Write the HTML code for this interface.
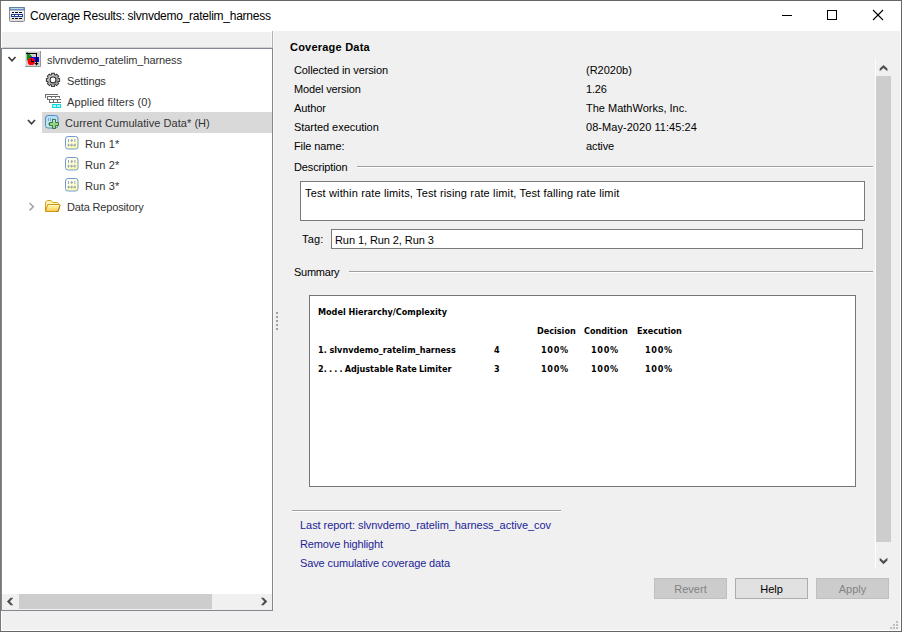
<!DOCTYPE html>
<html>
<head>
<meta charset="utf-8">
<title>Coverage Results: slvnvdemo_ratelim_harness</title>
<style>
html,body{margin:0;padding:0;}
body{width:902px;height:632px;overflow:hidden;background:#f0f0f0;position:relative;
 font-family:"Liberation Sans",sans-serif;font-size:11px;color:#000;}
.abs{position:absolute;}
.t{position:absolute;white-space:nowrap;line-height:14px;height:14px;}
#win{position:absolute;left:0;top:0;width:902px;height:632px;background:#f0f0f0;overflow:hidden;}
#titlebar{position:absolute;left:1px;top:1px;width:900px;height:30px;background:#fff;}
#title{position:absolute;left:29px;top:8px;font-size:12px;line-height:14px;letter-spacing:-0.25px;white-space:nowrap;color:#000;}
#tree{position:absolute;left:1px;top:48px;width:270px;height:561px;border:1px solid #828790;background:#fff;}
.row{position:absolute;left:0;height:21px;width:270px;}
.tt{position:absolute;white-space:nowrap;line-height:14px;color:#333;font-size:11px;}
.hl{position:absolute;height:1px;background:#a0a0a0;}
.box{position:absolute;background:#fff;border:1px solid #7a7a7a;box-sizing:border-box;}
.btn{position:absolute;top:578px;width:73px;height:21px;box-sizing:border-box;text-align:center;line-height:21px;font-size:11px;}
.btn.dis{background:#cccccc;border:1px solid #bfbfbf;color:#838383;}
.btn.en{background:#e1e1e1;border:1px solid #adadad;color:#000;}
.lnk{color:#1e1e96;}
.sb{font-weight:bold;font-size:9px;font-family:"DejaVu Sans Condensed","Liberation Sans",sans-serif;color:#000;}
.pc{letter-spacing:0.7px;}
</style>
</head>
<body>
<div id="win">
 <!-- window frame -->
 <div class="abs" style="left:0;top:0;width:902px;height:1px;background:#666"></div>
 <div class="abs" style="left:0;top:1px;width:1px;height:631px;background:#777"></div>
 <div class="abs" style="left:901px;top:0;width:1px;height:632px;background:#666"></div>
 <div class="abs" style="left:0;top:631px;width:902px;height:1px;background:#666"></div>
 <div class="abs" style="left:900px;top:31px;width:1px;height:600px;background:#fff"></div>
 <div class="abs" style="left:1px;top:630px;width:900px;height:1px;background:#fff"></div>
 <div class="abs" style="left:1px;top:31px;width:1px;height:600px;background:#fff"></div>

 <div id="titlebar">
  <svg class="abs" style="left:8px;top:6px" width="16" height="15" viewBox="0 0 16 15">
   <defs><linearGradient id="gi" x1="0" y1="0" x2="0" y2="1"><stop offset="0" stop-color="#ffffff"/><stop offset="1" stop-color="#dcdcdc"/></linearGradient></defs>
   <rect x="0.5" y="0.5" width="15" height="14" rx="1" fill="url(#gi)" stroke="#8c8c8c"/>
   <rect x="0.5" y="0.5" width="15" height="2.6" fill="#5f86b8" stroke="#57799f" stroke-width="0.6"/>
   <rect x="1.5" y="1.2" width="13" height="0.9" fill="#d6e8f8"/>
   <rect x="2" y="7" width="12" height="3" fill="#1c3f94"/>
   <g fill="#000"><rect x="3" y="5" width="2" height="1"/><rect x="6" y="5" width="3" height="1"/><rect x="10" y="5" width="3" height="1"/>
   <rect x="3" y="11" width="2" height="1"/><rect x="6" y="11" width="3" height="1"/><rect x="10" y="11" width="3" height="1"/></g>
   <g fill="#fff"><rect x="3" y="8" width="2" height="1"/><rect x="6" y="8" width="3" height="1"/><rect x="10" y="8" width="3" height="1"/></g>
  </svg>
  <div id="title">Coverage Results: slvnvdemo_ratelim_harness</div>
  <!-- window controls -->
  <svg class="abs" style="left:775px;top:0" width="125" height="30" viewBox="0 0 125 30">
   <g stroke="#000" stroke-width="1" fill="none" shape-rendering="crispEdges">
    <line x1="6" y1="14.5" x2="16" y2="14.5"/>
    <rect x="51.5" y="9.5" width="9" height="9"/>
   </g>
   <g stroke="#000" stroke-width="1.1" fill="none"><line x1="97" y1="9" x2="107" y2="19"/><line x1="107" y1="9" x2="97" y2="19"/></g>
  </svg>
 </div>

 <!-- splitter line above tree -->
 <div class="abs" style="left:1px;top:31px;width:271px;height:1px;background:#fff"></div>
 <div class="abs" style="left:271px;top:32px;width:1px;height:16px;background:#f8f8f8"></div>
 <div class="abs" style="left:272px;top:31px;width:1px;height:17px;background:#b2b2b2"></div>
 <div class="abs" style="left:273px;top:31px;width:1px;height:579px;background:#f8f8f8"></div>
 <div class="abs" style="left:2px;top:47px;width:270px;height:1px;background:#d2d2d2"></div>

 <div id="tree">
  <!-- selection -->
  <div class="abs" style="left:40px;top:63px;width:230px;height:21px;background:#d9d9d9"></div>

  <!-- chevrons -->
  <svg class="abs" style="left:0;top:0" width="60" height="180" viewBox="0 0 60 180">
   <g fill="none" stroke="#3a3a3a" stroke-width="1.6">
    <polyline points="6.5,8 10,11.8 13.5,8"/>
    <polyline points="26,71 29.5,74.8 33,71"/>
   </g>
   <polyline points="27.5,154 31.3,157.7 27.5,161.4" fill="none" stroke="#a6a6a6" stroke-width="1.6"/>
  </svg>

  <!-- root icon -->
  <svg class="abs" style="left:23px;top:2px" width="16" height="16" viewBox="0 0 16 16">
   <rect x="0" y="0" width="16" height="16" fill="#d2d2d2"/>
   <path d="M0.5 15.5V0.5H15.5" fill="none" stroke="#e6e6e6" stroke-width="1"/>
   <path d="M15.5 0V15.5H0" fill="none" stroke="#979797" stroke-width="1"/>
   <polygon points="1.8,0.8 1.8,10 7.2,5.5" fill="#0a8c14"/>
   <rect x="5" y="6" width="9" height="5" fill="#0000f0"/>
   <circle cx="6.3" cy="10.4" r="3.6" fill="#ff0000"/>
   <g fill="#000" shape-rendering="crispEdges">
    <rect x="6" y="8" width="1" height="3"/><rect x="6" y="10" width="3" height="1"/>
    <rect x="1" y="2" width="11" height="1"/><rect x="11" y="2" width="1" height="10"/>
   </g>
   <polygon points="9.4,12 13.6,12 11.5,14.4" fill="#000"/>
  </svg>
  <div class="tt" style="left:45px;top:4px;letter-spacing:-0.08px">slvnvdemo_ratelim_harness</div>

  <!-- settings gear -->
  <svg class="abs" style="left:43px;top:23px" width="16" height="16" viewBox="0 0 16 16">
   <defs><linearGradient id="gg" x1="0" y1="0" x2="1" y2="1"><stop offset="0" stop-color="#dcdcdc"/><stop offset="1" stop-color="#808080"/></linearGradient></defs>
   <g transform="translate(8,7.9)">
    <g fill="#303030">
     <rect x="-2" y="-7.1" width="4" height="14.2" rx="0.4"/>
     <rect x="-2" y="-7.1" width="4" height="14.2" rx="0.4" transform="rotate(45)"/>
     <rect x="-2" y="-7.1" width="4" height="14.2" rx="0.4" transform="rotate(90)"/>
     <rect x="-2" y="-7.1" width="4" height="14.2" rx="0.4" transform="rotate(135)"/>
    </g>
    <circle r="5.9" fill="#303030"/>
    <g fill="#b4b4b4">
     <rect x="-1.1" y="-6.2" width="2.2" height="12.4"/>
     <rect x="-1.1" y="-6.2" width="2.2" height="12.4" transform="rotate(45)"/>
     <rect x="-1.1" y="-6.2" width="2.2" height="12.4" transform="rotate(90)"/>
     <rect x="-1.1" y="-6.2" width="2.2" height="12.4" transform="rotate(135)"/>
    </g>
    <circle r="5" fill="url(#gg)"/>
    <circle r="3.4" fill="#303030"/>
    <circle r="2.4" fill="#fff"/>
   </g>
  </svg>
  <div class="tt" style="left:65px;top:25px;letter-spacing:-0.125px">Settings</div>

  <!-- filter icon -->
  <svg class="abs" style="left:43px;top:45px" width="18" height="16" viewBox="0 0 18 16">
   <g fill="#6e6e6e" shape-rendering="crispEdges">
    <rect x="0" y="0" width="13" height="1"/><rect x="0" y="0" width="1" height="4"/>
    <rect x="2" y="2" width="13" height="1"/><rect x="2" y="2" width="1" height="4"/>
    <rect x="6" y="3" width="1" height="1"/><rect x="10" y="3" width="1" height="1"/><rect x="14" y="3" width="1" height="1"/>
    <rect x="2" y="5" width="14" height="1"/>
    <rect x="4" y="5" width="1" height="4"/><rect x="8" y="5" width="1" height="4"/><rect x="12" y="5" width="1" height="4"/>
    <rect x="4" y="8" width="12" height="1"/>
   </g>
   <rect x="7" y="10" width="9" height="4" rx="0.5" fill="#00e0e0"/>
   <g fill="#b8ecff"><rect x="8" y="11" width="3" height="2"/><rect x="12" y="11" width="3" height="2"/></g>
  </svg>
  <div class="tt" style="left:65px;top:46px;letter-spacing:0.09px">Applied filters (0)</div>

  <!-- cumulative icon -->
  <svg class="abs" style="left:43px;top:66px" width="16" height="16" viewBox="0 0 16 16">
   <defs><linearGradient id="gc" x1="0" y1="0" x2="0" y2="1"><stop offset="0" stop-color="#b4dcf8"/><stop offset="1" stop-color="#c8ecd8"/></linearGradient></defs>
   <rect x="0.5" y="0.5" width="12.5" height="12.5" rx="2.5" fill="url(#gc)" stroke="#4f8ccc"/>
   <g fill="#7aa8d8"><rect x="3" y="3" width="1" height="3"/><rect x="5" y="3" width="1" height="3"/><rect x="7" y="3" width="1" height="1"/><rect x="3" y="8" width="1" height="2"/></g>
   <path d="M7.5 4.5H10.5V7.5H13.5V10.5H10.5V13.5H7.5V10.5H4.5V7.5H7.5Z" fill="#94d684" stroke="#3f7540" stroke-width="1"/>
   <rect x="8.2" y="5" width="1.6" height="2.4" fill="#c4e8f4"/>
  </svg>
  <div class="tt" style="left:63px;top:67px;letter-spacing:0.04px">Current Cumulative Data* (H)</div>

  <!-- run icons -->
  <svg width="0" height="0" style="position:absolute"><defs>
   <linearGradient id="gr" x1="0" y1="0" x2="0.8" y2="1"><stop offset="0" stop-color="#ffffff"/><stop offset="0.35" stop-color="#ffffee"/><stop offset="1" stop-color="#ffff9e"/></linearGradient>
   <g id="runic">
    <rect x="0.5" y="0.5" width="12.5" height="12.5" rx="2.5" fill="url(#gr)" stroke="#6f9bd0"/>
    <g fill="#9aa6b4"><rect x="3" y="3" width="1" height="3"/><rect x="6.2" y="3" width="1" height="3"/><rect x="9.4" y="3" width="1" height="3"/>
    <rect x="3" y="7.6" width="1" height="3"/><rect x="6.2" y="7.6" width="1" height="3"/><rect x="9.4" y="7.6" width="1" height="3"/>
    <rect x="2.4" y="8.6" width="8.6" height="1"/><rect x="5.4" y="4" width="2.6" height="1"/></g>
   </g></defs></svg>
  <svg class="abs" style="left:63px;top:87px" width="14" height="14"><use href="#runic"/></svg>
  <svg class="abs" style="left:63px;top:108px" width="14" height="14"><use href="#runic"/></svg>
  <svg class="abs" style="left:63px;top:129px" width="14" height="14"><use href="#runic"/></svg>
  <div class="tt" style="left:83px;top:88px;letter-spacing:0.13px">Run 1*</div>
  <div class="tt" style="left:83px;top:109px;letter-spacing:0.13px">Run 2*</div>
  <div class="tt" style="left:83px;top:130px;letter-spacing:0.13px">Run 3*</div>

  <!-- folder -->
  <svg class="abs" style="left:42px;top:150px" width="18" height="14" viewBox="0 0 18 14">
   <defs><linearGradient id="gf" x1="0" y1="0" x2="0" y2="1"><stop offset="0" stop-color="#fffcd0"/><stop offset="0.25" stop-color="#fff3a0"/><stop offset="1" stop-color="#ffc94a"/></linearGradient></defs>
   <path d="M1.5 12.5V3L3.5 1.5H7L8.8 3.5H13.5L14.5 4.5V6" fill="#fff6b8" stroke="#d6a21a" stroke-width="1" stroke-linejoin="round"/>
   <path d="M3.6 5.5H15.5Q16.2 5.5 16 6.3L14.3 12Q14.1 12.5 13.5 12.5H1.6Z" fill="url(#gf)" stroke="#d0961a" stroke-width="1" stroke-linejoin="round"/>
   <path d="M15.8 6.5L14.2 12.3H12" fill="none" stroke="#c07a12" stroke-width="1"/>
  </svg>
  <div class="tt" style="left:65px;top:151px;letter-spacing:-0.16px">Data Repository</div>

  <!-- h scrollbar -->
  <div class="abs" style="left:0;top:545px;width:270px;height:16px;background:#f0f0f0"></div>
  <div class="abs" style="left:17px;top:545px;width:193px;height:15px;background:#cdcdcd"></div>
  <svg class="abs" style="left:0;top:545px" width="270" height="16" viewBox="0 0 270 16">
   <g fill="#4f4f4f">
    <polygon points="4.9,7.5 8.6,3.7 11.3,3.7 8,7.5 11.3,11.3 8.6,11.3"/>
    <polygon points="265.3,7.5 261.6,3.7 258.9,3.7 262.2,7.5 258.9,11.3 261.6,11.3"/>
   </g>
  </svg>
 </div>

 <!-- splitter dots -->
 <svg class="abs" style="left:276px;top:312px" width="2" height="18" viewBox="0 0 2 18">
  <g fill="#a0a0a0"><rect y="0" width="2" height="2"/><rect y="4" width="2" height="2"/><rect y="8" width="2" height="2"/><rect y="12" width="2" height="2"/><rect y="16" width="2" height="2"/></g>
 </svg>

 <!-- right pane -->
 <div class="t" style="left:290px;top:40px;font-weight:bold;letter-spacing:0.22px">Coverage Data</div>

 <div class="t" id="l1" style="letter-spacing:-0.1px;left:294px;top:63px">Collected in version</div>
 <div class="t" id="l2" style="letter-spacing:-0.14px;left:294px;top:82px">Model version</div>
 <div class="t" id="l3" style="letter-spacing:-0.1px;left:294px;top:101px">Author</div>
 <div class="t" id="l4" style="letter-spacing:-0.05px;left:294px;top:120px">Started execution</div>
 <div class="t" id="l5" style="letter-spacing:-0.1px;left:294px;top:139px">File name:</div>

 <div class="t" id="v1" style="left:586px;top:63px">(R2020b)</div>
 <div class="t" id="v2" style="letter-spacing:-0.2px;left:586px;top:82px">1.26</div>
 <div class="t" id="v3" style="left:586px;top:101px">The MathWorks, Inc.</div>
 <div class="t" id="v4" style="letter-spacing:0.05px;left:586px;top:120px">08-May-2020 11:45:24</div>
 <div class="t" id="v5" style="letter-spacing:-0.12px;left:586px;top:139px">active</div>

 <div class="t" id="gd" style="letter-spacing:-0.14px;left:294px;top:160px">Description</div>
 <div class="hl" style="left:357px;top:166px;width:516px"></div>
 <div class="hl" style="left:357px;top:167px;width:516px;background:#fff"></div>
 <div class="box" style="left:300px;top:181px;width:565px;height:40px"></div>
 <div class="t" id="desc" style="letter-spacing:0.145px;left:305px;top:186px">Test within rate limits, Test rising rate limit, Test falling rate limit</div>

 <div class="t" id="tagl" style="letter-spacing:0.2px;left:302px;top:232px">Tag:</div>
 <div class="box" style="left:331px;top:229px;width:532px;height:20px"></div>
 <div class="t" id="tagv" style="letter-spacing:-0.08px;left:335px;top:233px">Run 1, Run 2, Run 3</div>

 <div class="t" id="gs" style="letter-spacing:-0.25px;left:294px;top:265px">Summary</div>
 <div class="hl" style="left:349px;top:271px;width:524px"></div>
 <div class="hl" style="left:349px;top:272px;width:524px;background:#fff"></div>
 <div class="box" style="left:309px;top:295px;width:547px;height:192px;border-color:#767676"></div>

 <div class="t sb" id="s0" style="left:318px;top:305px">Model Hierarchy/Complexity</div>
 <div class="t sb" id="s1" style="left:537px;top:324px">Decision</div>
 <div class="t sb" id="s2" style="left:584px;top:324px">Condition</div>
 <div class="t sb" id="s3" style="left:637px;top:324px">Execution</div>
 <div class="t sb" id="s4" style="left:318px;top:343px">1. slvnvdemo_ratelim_harness</div>
 <div class="t sb" id="s5" style="left:494px;top:343px">4</div>
 <div class="t sb pc" id="s6" style="left:541px;top:343px">100%</div>
 <div class="t sb pc" id="s7" style="left:591px;top:343px">100%</div>
 <div class="t sb pc" id="s8" style="left:645px;top:343px">100%</div>
 <div class="t sb" id="s9" style="word-spacing:-0.63px;left:318px;top:362px">2. . . . Adjustable Rate Limiter</div>
 <div class="t sb" id="s10" style="left:494px;top:362px">3</div>
 <div class="t sb pc" id="s11" style="left:541px;top:362px">100%</div>
 <div class="t sb pc" id="s12" style="left:591px;top:362px">100%</div>
 <div class="t sb pc" id="s13" style="left:645px;top:362px">100%</div>

 <div class="hl" style="left:292px;top:510px;width:269px"></div>
 <div class="hl" style="left:292px;top:511px;width:269px;background:#fff"></div>

 <div class="t lnk" id="k1" style="letter-spacing:-0.055px;left:300px;top:518px">Last report: slvnvdemo_ratelim_harness_active_cov</div>
 <div class="t lnk" id="k2" style="letter-spacing:-0.125px;left:300px;top:537px">Remove highlight</div>
 <div class="t lnk" id="k3" style="letter-spacing:-0.12px;left:300px;top:556px">Save cumulative coverage data</div>

 <!-- v scrollbar -->
 <div class="abs" style="left:875px;top:59px;width:1px;height:510px;background:#fff"></div>
 <div class="abs" style="left:876px;top:76px;width:15px;height:466px;background:#cdcdcd"></div>
 <svg class="abs" style="left:876px;top:59px" width="15" height="511" viewBox="0 0 15 511">
  <g fill="#4f4f4f">
   <polygon points="7.5,5.9 11.4,9.6 11.4,12.3 7.5,9 3.7,12.3 3.7,9.6"/>
   <polygon points="7.5,505.2 11.4,501.5 11.4,498.8 7.5,502.1 3.7,498.8 3.7,501.5"/>
  </g>
 </svg>

 <div class="btn dis" style="left:654px">Revert</div>
 <div class="btn en" style="left:735px">Help</div>
 <div class="btn dis" style="left:816px">Apply</div>

 <!-- size grip -->
 <svg class="abs" style="left:890px;top:621px" width="8" height="8" viewBox="0 0 8 8">
  <g fill="#bfbfbf"><rect x="6" y="0" width="2" height="2"/><rect x="3" y="3" width="2" height="2"/><rect x="6" y="3" width="2" height="2"/><rect x="0" y="6" width="2" height="2"/><rect x="3" y="6" width="2" height="2"/><rect x="6" y="6" width="2" height="2"/></g>
 </svg>
</div>
</body>
</html>
